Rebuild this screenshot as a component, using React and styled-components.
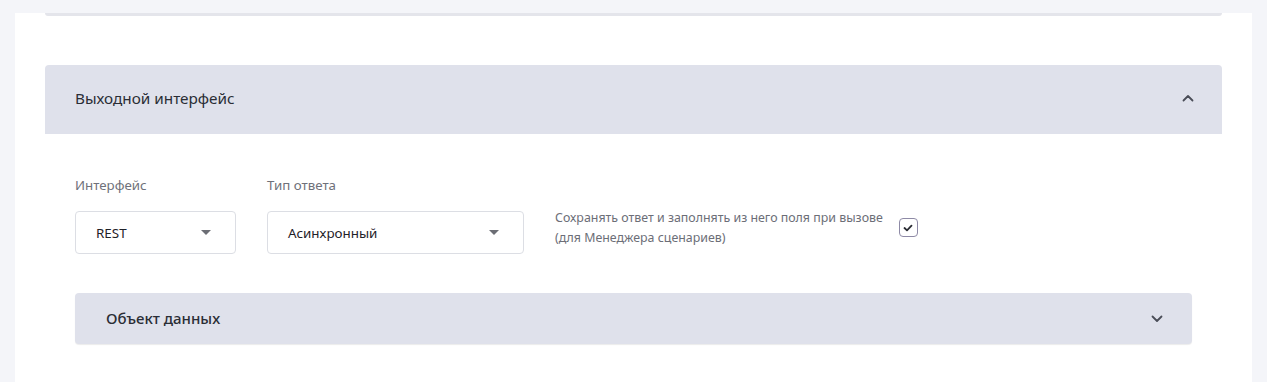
import React from 'react'
import styled, { createGlobalStyle } from 'styled-components'

const GlobalStyle = createGlobalStyle`
    html, body {
        margin: 0;
        padding: 0;
        background: #f4f5f9;
        font-family: "Noto Sans", "Open Sans", sans-serif;
    }
`;

const Page = styled.div`
    padding: 13px 15px 0 15px;
    height: 382px;
    box-sizing: border-box;
    overflow: hidden;
`;

const Card = styled.section`
    background: #fff;
    padding: 0 30px 40px;
    min-height: 400px;
`;

const PanelTail = styled.div`
    height: 3px;
    background: #e4e5eb;
    border-radius: 0 0 3px 3px;
`;

const Panel = styled.div`
    margin-top: 49px;
`;

const PanelHeader = styled.header`
    display: flex;
    align-items: center;
    justify-content: space-between;
    height: ${p => p.$small ? '51px' : '69px'};
    padding: ${p => p.$small ? '0 29px 2px 31px' : '0 28px 3px 30px'};
    background: #dfe1eb;
    border-radius: ${p => p.$small ? '4px' : '4px 4px 0 0'};
    box-shadow: ${p => p.$small ? '0 1px 1px rgba(0,0,0,0.08)' : 'none'};
    color: #2a2d35;
    font-size: ${p => p.$small ? '15px' : '15.3px'};
    font-weight: ${p => p.$small ? 500 : 400};
    box-sizing: border-box;

    svg {
        margin-top: ${p => p.$small ? '2px' : '0'};
    }
`;

const PanelBody = styled.div`
    padding: 42px 30px 0;
`;

const FieldRow = styled.div`
    display: flex;
    align-items: flex-end;
    gap: 31px;
`;

const Field = styled.div`
    display: flex;
    flex-direction: column;
    gap: 17px;
    width: ${p => p.$width}px;
`;

const Label = styled.label`
    font-size: 13.3px;
    line-height: 18px;
    color: #6f717a;
`;

const Select = styled.div`
    display: flex;
    align-items: center;
    justify-content: space-between;
    height: 43px;
    padding: 0 24px 0 20px;
    border: 1px solid #dcdee4;
    border-radius: 4px;
    box-sizing: border-box;
    font-size: 13.4px;
    color: #1f2128;
`;

const Caret = styled.span`
    width: 0;
    height: 0;
    border-left: 5px solid transparent;
    border-right: 5px solid transparent;
    border-top: 5px solid #6c6e75;
`;

const CheckGroup = styled.div`
    display: flex;
    align-items: center;
    gap: 16px;
    height: 43px;
    margin-bottom: 5px;
`;

const CheckText = styled.span`
    font-size: 12.4px;
    line-height: 20px;
    color: #6c6e77;
    white-space: nowrap;
`;

const CheckBox = styled.span`
    display: flex;
    align-items: center;
    justify-content: center;
    width: 19px;
    height: 19px;
    border: 1.5px solid #8e8aa6;
    border-radius: 4px;
    box-sizing: border-box;
`;

const SubPanel = styled.div`
    margin-top: 39px;
`;

function Chevron({ up }) {
    return (
        <svg width="12" height="8" viewBox="0 0 12 8">
            <path
                d={up ? 'M1.5 6.5 L6 2 L10.5 6.5' : 'M1.5 1.5 L6 6 L10.5 1.5'}
                fill="none"
                stroke="#4a4d57"
                strokeWidth="1.8"
                strokeLinecap="round"
                strokeLinejoin="round"
            />
        </svg>
    )
}

function App() {
    return (
        <>
            <GlobalStyle />
            <Page>
                <Card>
                    <PanelTail />
                    <Panel>
                        <PanelHeader>
                            <span>Выходной интерфейс</span>
                            <Chevron up />
                        </PanelHeader>
                        <PanelBody>
                            <FieldRow>
                                <Field $width={161}>
                                    <Label>Интерфейс</Label>
                                    <Select>
                                        <span>REST</span>
                                        <Caret />
                                    </Select>
                                </Field>
                                <Field $width={257}>
                                    <Label>Тип ответа</Label>
                                    <Select>
                                        <span>Асинхронный</span>
                                        <Caret />
                                    </Select>
                                </Field>
                                <CheckGroup>
                                    <CheckText>
                                        Сохранять ответ и заполнять из него поля при вызове
                                        <br />
                                        (для Менеджера сценариев)
                                    </CheckText>
                                    <CheckBox>
                                        <svg width="10" height="8" viewBox="0 0 10 8">
                                            <path d="M1.5 4 L4 6.3 L8.5 1.7" fill="none" stroke="#2a2c33" strokeWidth="1.8" strokeLinecap="round" strokeLinejoin="round" />
                                        </svg>
                                    </CheckBox>
                                </CheckGroup>
                            </FieldRow>
                            <SubPanel>
                                <PanelHeader $small>
                                    <span>Объект данных</span>
                                    <Chevron />
                                </PanelHeader>
                            </SubPanel>
                        </PanelBody>
                    </Panel>
                </Card>
            </Page>
        </>
    )
}

export default App
